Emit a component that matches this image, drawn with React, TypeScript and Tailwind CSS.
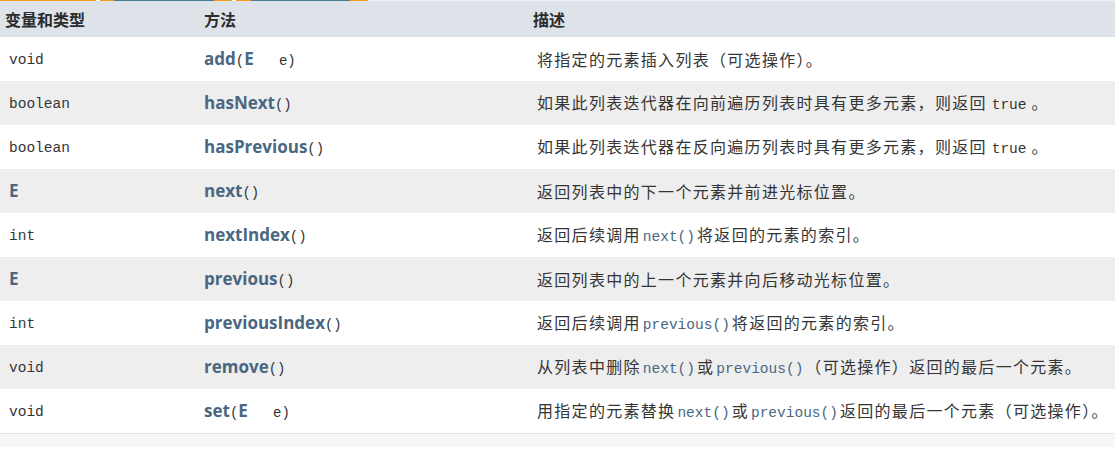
import type { ReactNode } from "react";

const cjk = "font-['SimSun','Noto_Sans_CJK_SC',sans-serif]";
const mono = "font-['Liberation_Mono','Noto_Sans_CJK_SC',monospace]";
const sans = "font-['Open_Sans','Noto_Sans_CJK_SC',sans-serif]";

function Code({ children, blue }: { children: ReactNode; blue?: boolean }) {
  return (
    <span
      className={`${mono} text-[14.5px] tracking-normal ${blue ? "text-[#4a6782] mx-[2px]" : "text-[#353535]"}`}
    >
      {children}
    </span>
  );
}

function Name({ children }: { children: ReactNode }) {
  return <span className={`${sans} font-bold text-[17px] text-[#4a6782]`}>{children}</span>;
}

interface Row {
  type: ReactNode;
  method: ReactNode;
  desc: ReactNode;
}

const paren = (s: string) => <span className={`${mono} text-[14px] text-[#353535]`}>{s}</span>;

const rows: Row[] = [
  {
    type: <Code>void</Code>,
    method: (
      <>
        <Name>add</Name>
        {paren("(")}
        <Name>E</Name>
        <span className={`${mono} text-[14px] text-[#353535]`}>{"   e)"}</span>
      </>
    ),
    desc: "将指定的元素插入列表（可选操作）。",
  },
  {
    type: <Code>boolean</Code>,
    method: (
      <>
        <Name>hasNext</Name>
        {paren("()")}
      </>
    ),
    desc: (
      <>
        如果此列表迭代器在向前遍历列表时具有更多元素，则返回 <Code>true</Code> 。
      </>
    ),
  },
  {
    type: <Code>boolean</Code>,
    method: (
      <>
        <Name>hasPrevious</Name>
        {paren("()")}
      </>
    ),
    desc: (
      <>
        如果此列表迭代器在反向遍历列表时具有更多元素，则返回 <Code>true</Code> 。
      </>
    ),
  },
  {
    type: <Name>E</Name>,
    method: (
      <>
        <Name>next</Name>
        {paren("()")}
      </>
    ),
    desc: "返回列表中的下一个元素并前进光标位置。",
  },
  {
    type: <Code>int</Code>,
    method: (
      <>
        <Name>nextIndex</Name>
        {paren("()")}
      </>
    ),
    desc: (
      <>
        返回后续调用<Code blue>next()</Code>将返回的元素的索引。
      </>
    ),
  },
  {
    type: <Name>E</Name>,
    method: (
      <>
        <Name>previous</Name>
        {paren("()")}
      </>
    ),
    desc: "返回列表中的上一个元素并向后移动光标位置。",
  },
  {
    type: <Code>int</Code>,
    method: (
      <>
        <Name>previousIndex</Name>
        {paren("()")}
      </>
    ),
    desc: (
      <>
        返回后续调用<Code blue>previous()</Code>将返回的元素的索引。
      </>
    ),
  },
  {
    type: <Code>void</Code>,
    method: (
      <>
        <Name>remove</Name>
        {paren("()")}
      </>
    ),
    desc: (
      <>
        从列表中删除<Code blue>next()</Code>或<Code blue>previous()</Code>（可选操作）返回的最后一个元素。
      </>
    ),
  },
  {
    type: <Code>void</Code>,
    method: (
      <>
        <Name>set</Name>
        {paren("(")}
        <Name>E</Name>
        <span className={`${mono} text-[14px] text-[#353535]`}>{"   e)"}</span>
      </>
    ),
    desc: (
      <>
        用指定的元素替换<Code blue>next()</Code>或<Code blue>previous()</Code>返回的最后一个元素（可选操作）。
      </>
    ),
  },
];

export default function App() {
  return (
    <div className="w-[1115px] h-[455px] bg-white overflow-hidden">
      {/* tab strip */}
      <div className="flex h-[1px]">
        <div className="w-[96px] bg-[#f8981d]" />
        <div className="w-[4px] bg-white" />
        <div className="w-[14px] bg-[#f8981d]" />
        <div className="w-[100px] bg-[#4d7a97]" />
        <div className="w-[18px] bg-[#f8981d]" />
        <div className="w-[4px] bg-white" />
        <div className="w-[15px] bg-[#f8981d]" />
        <div className="w-[99px] bg-[#4d7a97]" />
        <div className="w-[18px] bg-[#f8981d]" />
        <div className="flex-1 bg-[#eef1f5]" />
      </div>

      <table className="w-full border-collapse table-fixed">
        <colgroup>
          <col className="w-[195px]" />
          <col className="w-[333px]" />
          <col />
        </colgroup>
        <thead>
          <tr className={`h-[36px] bg-[#dee3e9] text-left ${cjk} font-bold text-[16px] text-[#2c2c2c]`}>
            <th className="pl-[5px] font-bold">变量和类型</th>
            <th className="pl-[9px] font-bold">方法</th>
            <th className="pl-[5px] font-bold">描述</th>
          </tr>
        </thead>
        <tbody>
          {rows.map((r, i) => (
            <tr key={i} className={`h-[44px] ${i % 2 === 1 ? "bg-[#eeeeee]" : "bg-white"}`}>
              <td className="pl-[9px] align-middle whitespace-pre">{r.type}</td>
              <td className="pl-[9px] align-middle whitespace-pre">{r.method}</td>
              <td className={`pl-[9px] align-middle whitespace-pre ${cjk} text-[16px] tracking-[1.3px] text-[#353535]`}>
                {r.desc}
              </td>
            </tr>
          ))}
        </tbody>
      </table>
      <div className="h-[14px] border-t border-[#e4e4e4] bg-[#f7f7f7]" />
    </div>
  );
}
